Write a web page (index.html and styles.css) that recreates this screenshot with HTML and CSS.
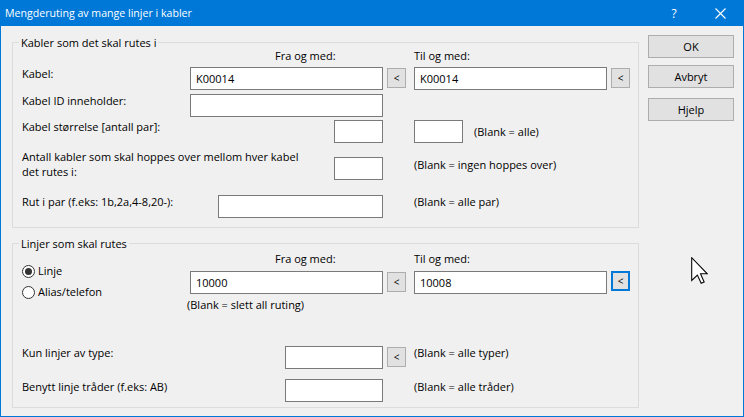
FILE: index.html
```html
<!DOCTYPE html>
<html lang="no">
<head>
<meta charset="utf-8">
<title>Mengderuting av mange linjer i kabler</title>
<link rel="stylesheet" href="styles.css">
</head>
<body>
<div class="window">
  <div class="titlebar">
    <span class="title">Mengderuting av mange linjer i kabler</span>
    <span class="tb-btn tb-help">?</span>
    <span class="tb-btn tb-close"><svg width="11" height="11" viewBox="0 0 11 11"><path d="M0.5 0.5 L10.5 10.5 M10.5 0.5 L0.5 10.5" stroke="#fff" stroke-width="1.1" fill="none"/></svg></span>
  </div>
  <div class="client">
    <div class="groups">
      <fieldset class="group g1">
        <legend>Kabler som det skal rutes i</legend>
        <div class="row r-head1">
          <div class="c1 head-fra">Fra og med:</div>
          <div></div>
          <div class="c3">Til og med:</div>
          <div></div>
        </div>
        <div class="row r-kabel">
          <div class="c1"><span class="lbl">Kabel:</span><input class="field w193" value="K00014"></div>
          <button class="sbtn">&lt;</button>
          <div class="c3"><input class="field w193" value="K00014"></div>
          <button class="sbtn">&lt;</button>
        </div>
        <div class="row r-id">
          <div class="c1"><span class="lbl">Kabel ID inneholder:</span><input class="field w193" value=""></div>
          <div></div>
          <div class="c3"></div>
          <div></div>
        </div>
        <div class="row r-size">
          <div class="c1"><span class="lbl">Kabel størrelse [antall par]:</span><input class="field w49" value=""></div>
          <div></div>
          <div class="c3"><input class="field w49" value=""><span class="note note-size">(Blank = alle)</span></div>
          <div></div>
        </div>
        <div class="row r-antall">
          <div class="c1"><span class="lbl lbl-antall">Antall kabler som skal hoppes over mellom hver kabel<br>det rutes i:</span><input class="field w49 f-antall" value=""></div>
          <div></div>
          <div class="c3"><span class="note note-antall">(Blank = ingen hoppes over)</span></div>
          <div></div>
        </div>
        <div class="row r-rut">
          <div class="c1"><span class="lbl">Rut i par (f.eks: 1b,2a,4-8,20-):</span><input class="field w165" value=""></div>
          <div></div>
          <div class="c3"><span class="note">(Blank = alle par)</span></div>
          <div></div>
        </div>
      </fieldset>

      <fieldset class="group g2">
        <legend>Linjer som skal rutes</legend>
        <div class="row r-head2">
          <div class="c1 head-fra">Fra og med:</div>
          <div></div>
          <div class="c3">Til og med:</div>
          <div></div>
        </div>
        <div class="row r-linje">
          <div class="c1">
            <div class="radios">
              <label class="radio"><span class="mark checked"></span>Linje</label>
              <label class="radio"><span class="mark"></span>Alias/telefon</label>
            </div>
            <div class="fra-col">
              <input class="field w193" value="10000">
              <span class="note note-slett">(Blank = slett all ruting)</span>
            </div>
          </div>
          <button class="sbtn sbtn-linje">&lt;</button>
          <div class="c3"><input class="field w193 f-linje" value="10008"></div>
          <button class="sbtn sbtn-focus">&lt;</button>
        </div>
        <div class="row r-kun">
          <div class="c1"><span class="lbl">Kun linjer av type:</span><input class="field w98" value=""></div>
          <button class="sbtn">&lt;</button>
          <div class="c3"><span class="note">(Blank = alle typer)</span></div>
          <div></div>
        </div>
        <div class="row r-benytt">
          <div class="c1"><span class="lbl lbl-flat">Benytt linje tråder (f.eks: AB)</span><input class="field w98" value=""></div>
          <div></div>
          <div class="c3"><span class="note note-flat">(Blank = alle tråder)</span></div>
          <div></div>
        </div>
      </fieldset>
    </div>
    <div class="buttons">
      <button class="btn">OK</button>
      <button class="btn btn-avbryt">Avbryt</button>
      <button class="btn btn-hjelp">Hjelp</button>
    </div>
  </div>
  <svg class="cursor" width="17" height="27" viewBox="0 0 12 19">
    <path d="M0.5 0.5 L0.5 16.5 L4.5 12.7 L7.2 18.5 L9.3 17.6 L6.7 11.8 L11.5 11.8 Z" fill="#fff" stroke="#000" stroke-width="0.75" stroke-linejoin="miter"/>
  </svg>
</div>
</body>
</html>
```

FILE: styles.css
```css
html, body {
  margin: 0;
  padding: 0;
}

body {
  font-family: "Open Sans", "Noto Sans", sans-serif;
  font-size: 11px;
  line-height: 15px;
  color: #000;
  background: #f0f0f0;
}

.window {
  position: relative;
  width: 744px;
  height: 417px;
  box-sizing: border-box;
  border: 1px solid #0078d7;
  border-top: 0;
  background: #f0f0f0;
  display: flex;
  flex-direction: column;
  overflow: hidden;
}

.titlebar {
  height: 26px;
  flex: none;
  background: #0078d7;
  color: #fff;
  display: flex;
  align-items: center;
  padding-left: 4px;
}

.title {
  flex: 1;
  font-size: 10.6px;
}

.tb-btn {
  width: 46px;
  height: 26px;
  display: flex;
  align-items: center;
  justify-content: center;
}

.tb-help {
  font-size: 12px;
}

.client {
  flex: 1;
  display: flex;
  gap: 9px;
  padding: 9px 9px 0 11px;
}

.groups {
  width: 627px;
  flex: none;
  display: flex;
  flex-direction: column;
  gap: 8px;
}

.group {
  margin: 0;
  padding: 0 8px 0 9px;
  border: 1px solid #dcdcdc;
  min-width: 0;
}

.group legend {
  padding: 0 2px;
  margin-left: -3px;
  line-height: 15px;
}

.g1 {
  padding-bottom: 9px;
}

.g2 {
  padding-bottom: 5px;
}

.row {
  display: grid;
  grid-template-columns: 361px 19px 197px 19px;
  column-gap: 4px;
  align-items: start;
}

.c1 {
  display: flex;
  justify-content: space-between;
  align-items: flex-start;
}

.c3 {
  padding-left: 4px;
  display: flex;
  align-items: flex-start;
}

.head-fra {
  padding-left: 253px;
  display: block;
}

.lbl {
  margin-top: -1px;
  white-space: nowrap;
}

.lbl-flat {
  margin-top: 0;
}

.note {
  margin-top: -1px;
  white-space: nowrap;
}

.note-flat {
  margin-top: 0;
}

.field {
  display: block;
  height: 23px;
  box-sizing: border-box;
  border: 1px solid #7a7a7a;
  background: #fff;
  padding: 0 5px;
  margin: 0;
  font: inherit;
  color: #000;
  outline: none;
}

.w193 { width: 193px; }
.w165 { width: 165px; }
.w98 { width: 98px; }
.w49 { width: 49px; }

.sbtn {
  width: 19px;
  height: 20px;
  box-sizing: border-box;
  margin: 1px 0 0;
  padding: 0;
  border: 1px solid #adadad;
  background: #e1e1e1;
  font: inherit;
  font-size: 10px;
  line-height: 16px;
  color: #000;
}

.sbtn-focus {
  border: 2px solid #0078d7;
  margin-top: 8px;
}

.sbtn-linje {
  margin-top: 9px;
}

/* group 1 vertical rhythm */
.r-head1 { margin-top: -2px; }
.r-kabel { margin-top: 4px; }
.r-id { margin-top: 4px; }
.r-size { margin-top: 3px; }
.r-antall { margin-top: 6px; }
.r-rut { margin-top: 15px; }

.lbl-antall {
  margin-top: 0;
}

.f-antall {
  margin-top: 8px;
}

.note-antall {
  margin-top: 8px;
}

.note-size {
  margin-left: 11px;
  margin-top: 4px;
}

/* group 2 vertical rhythm */
.r-head2 { margin-top: 0; }
.r-linje { margin-top: -3px; }
.r-kun { margin-top: 34px; }
.r-benytt { margin-top: 10px; }

.radios {
  display: flex;
  flex-direction: column;
  gap: 6px;
}

.radio {
  display: flex;
  align-items: center;
  gap: 3px;
}

.mark {
  width: 13px;
  height: 13px;
  box-sizing: border-box;
  border: 1px solid #333;
  border-radius: 50%;
  background: #fff;
  display: flex;
  align-items: center;
  justify-content: center;
  margin-top: 1px;
}

.mark.checked::after {
  content: "";
  width: 7px;
  height: 7px;
  border-radius: 50%;
  background: #333;
}

.fra-col {
  display: flex;
  flex-direction: column;
  margin-top: 8px;
}

.note-slett {
  margin-top: 3px;
  margin-left: -3px;
}

.f-linje {
  margin-top: 8px;
}

.buttons {
  display: flex;
  flex-direction: column;
  width: 86px;
}

.btn {
  width: 86px;
  height: 23px;
  box-sizing: border-box;
  margin: 0;
  padding: 0;
  border: 1px solid #adadad;
  background: #e1e1e1;
  font: inherit;
  color: #000;
}

.btn-avbryt { margin-top: 7px; }
.btn-hjelp { margin-top: 10px; }

.cursor {
  position: absolute;
  left: 690px;
  top: 257px;
}
```
